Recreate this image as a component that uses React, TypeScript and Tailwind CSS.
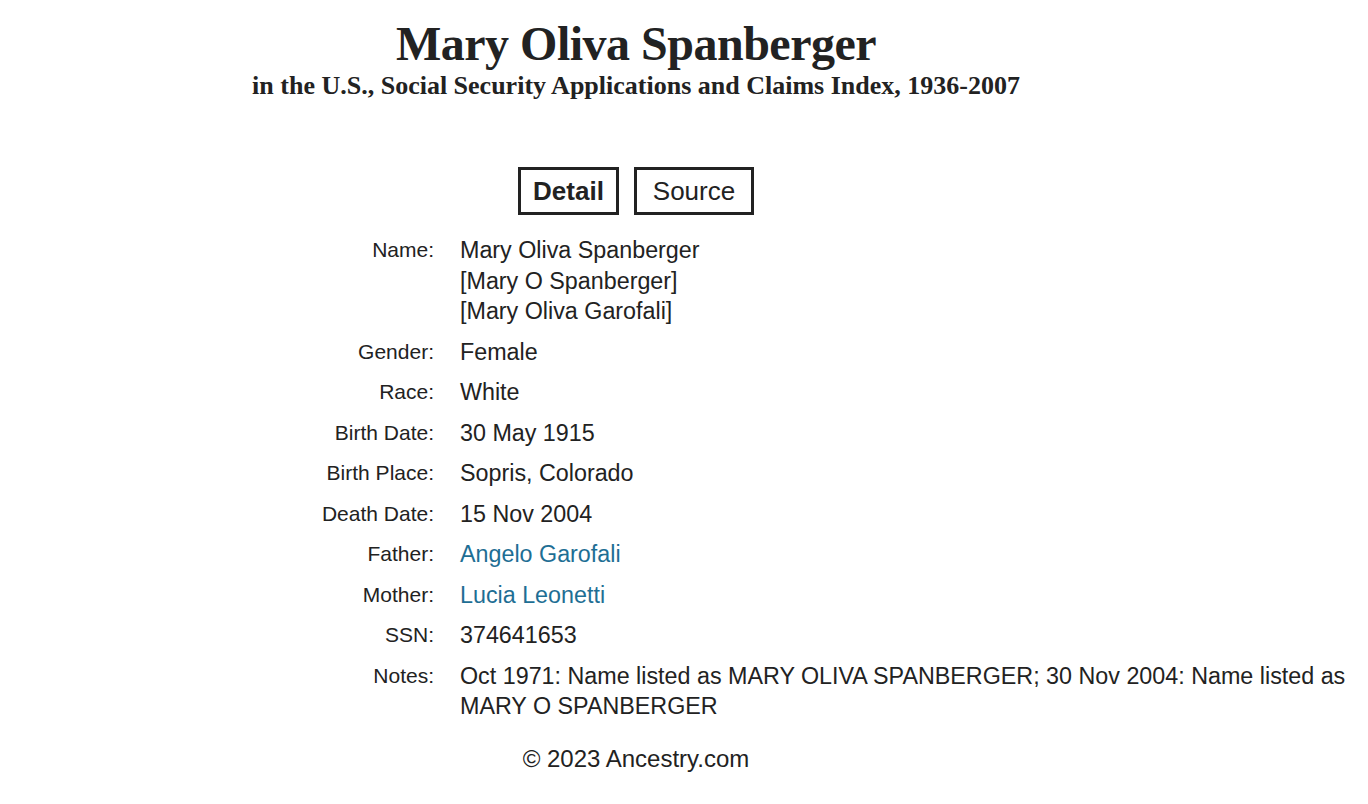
import React from "react";

type Row = {
  label: string;
  values: React.ReactNode[];
  link?: boolean;
};

const rows: Row[] = [
  {
    label: "Name:",
    values: ["Mary Oliva Spanberger", "[Mary O Spanberger]", "[Mary Oliva Garofali]"],
  },
  { label: "Gender:", values: ["Female"] },
  { label: "Race:", values: ["White"] },
  { label: "Birth Date:", values: ["30 May 1915"] },
  { label: "Birth Place:", values: ["Sopris, Colorado"] },
  { label: "Death Date:", values: ["15 Nov 2004"] },
  { label: "Father:", values: ["Angelo Garofali"], link: true },
  { label: "Mother:", values: ["Lucia Leonetti"], link: true },
  { label: "SSN:", values: ["374641653"] },
  {
    label: "Notes:",
    values: [
      "Oct 1971: Name listed as MARY OLIVA SPANBERGER; 30 Nov 2004: Name listed as",
      "MARY O SPANBERGER",
    ],
  },
];

export default function App() {
  return (
    <div className="min-h-[804px] bg-white text-[#222]">
      <div className="w-[1272px] font-['Liberation_Sans',Arial,sans-serif]">
        <header className="pt-[15px] text-center font-['Liberation_Serif','Times_New_Roman',serif] font-bold">
          <h1 className="text-[48px] leading-[58px] tracking-[-0.5px]">Mary Oliva Spanberger</h1>
          <p className="text-[26px] leading-[26px]">
            in the U.S., Social Security Applications and Claims Index, 1936-2007
          </p>
        </header>

        <div className="mt-[68px] flex justify-center gap-[15px]">
          <button className="h-[48px] w-[101px] border-[3px] border-[#222] text-[26px] font-bold">
            Detail
          </button>
          <button className="h-[48px] w-[120px] border-[3px] border-[#222] text-[26px]">
            Source
          </button>
        </div>

        <div className="mt-[15px]">
          {rows.map(row => (
            <div key={row.label} className="flex py-[5px]">
              <div className="w-[434px] shrink-0 text-right text-[21px] leading-[30.5px]">
                {row.label}
              </div>
              <div className="ml-[26px] text-[23.3px] leading-[30.5px]">
                {row.values.map((v, i) => (
                  <div
                    key={i}
                    className={`whitespace-nowrap ${row.link ? "text-[#1e6e94]" : ""}`}
                  >
                    {v}
                  </div>
                ))}
              </div>
            </div>
          ))}
        </div>

        <div className="mt-[17px] text-center text-[24px] leading-[30px]">© 2023 Ancestry.com</div>
      </div>
    </div>
  );
}
